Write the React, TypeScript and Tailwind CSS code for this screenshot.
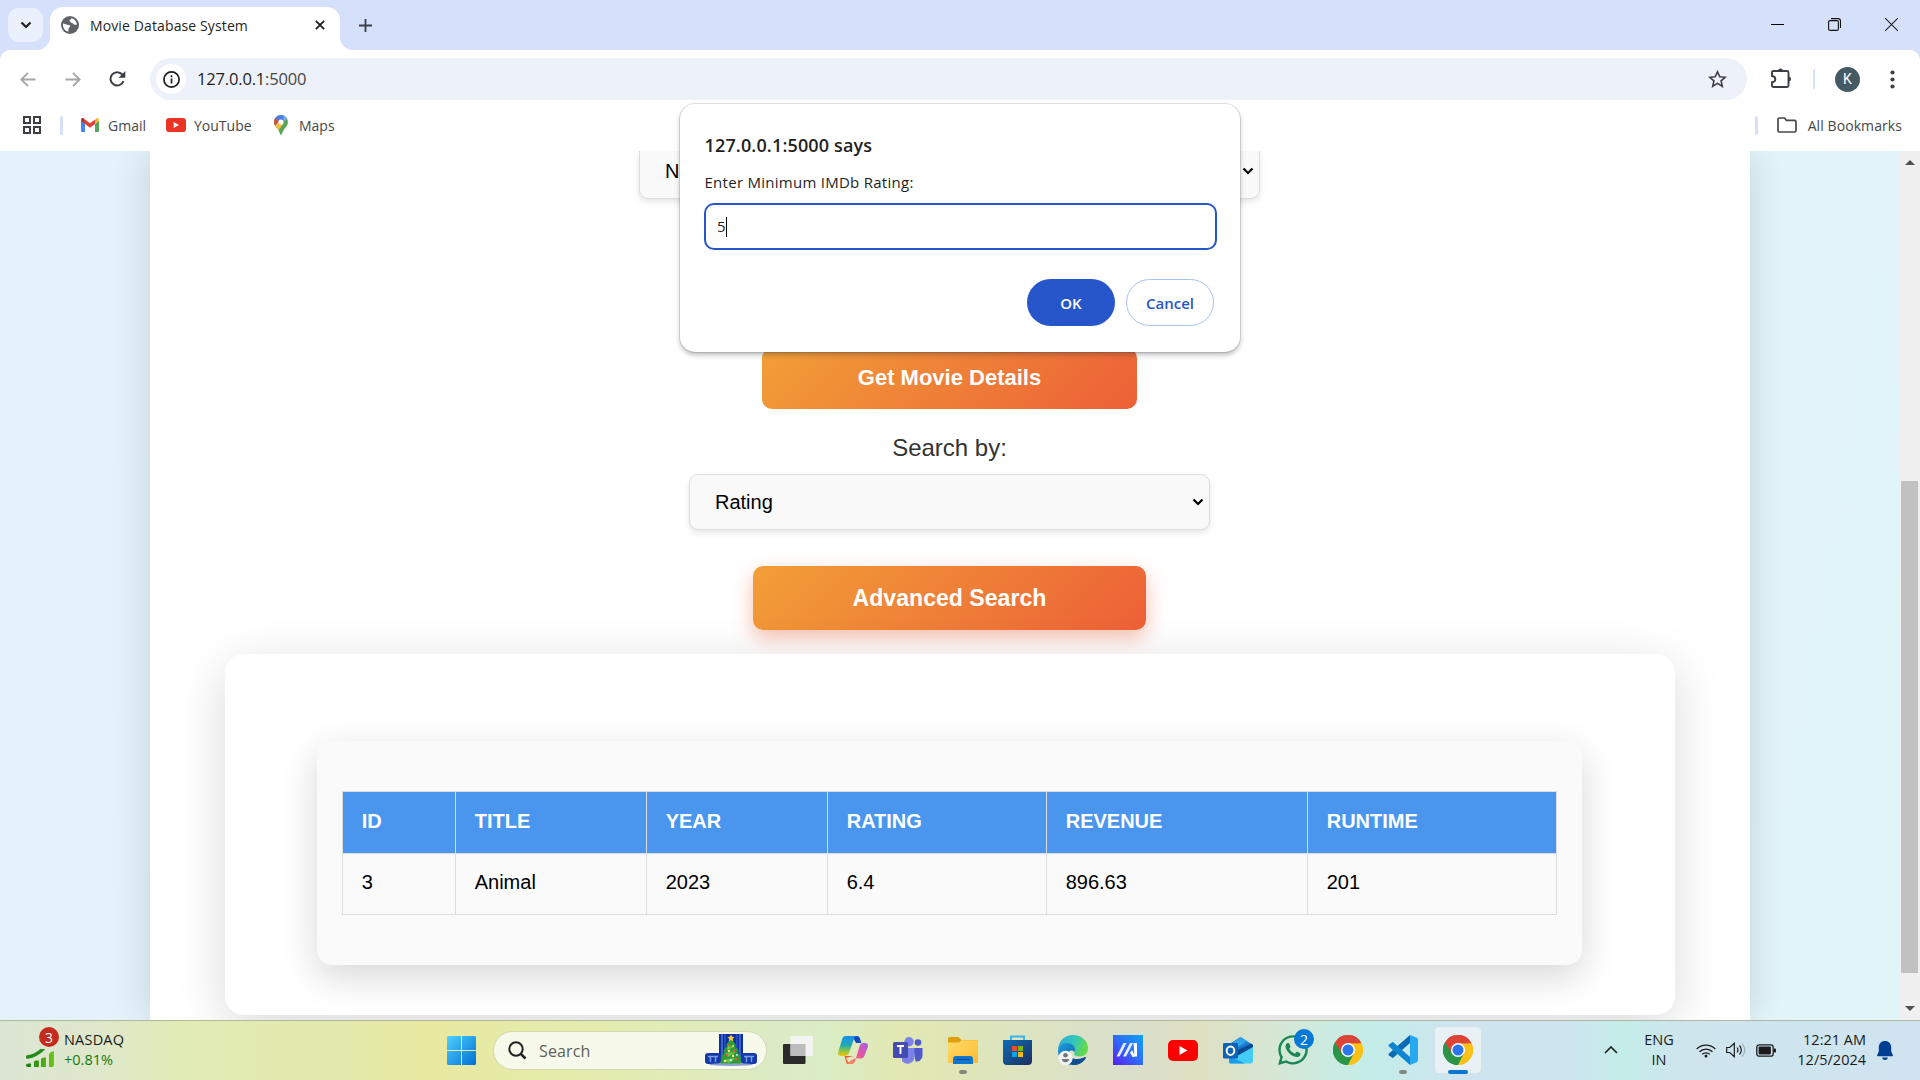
import React from "react";
import { FaWhatsapp } from "react-icons/fa";

const ui = "font-['Open_Sans','Noto_Sans',sans-serif]";

function Globe() {
  return (
    <svg width="18" height="18" viewBox="0 0 18 18">
      <circle cx="9" cy="9" r="9" fill="#5f6368" />
      <path d="M2 7.500c2 .3 3 1 4.500 1.200 2 .2 3 .6 2.600 1.800-.4 1-1.600 1-1.600 2.300v2.700C4.500 15.300 2 12.500 2 9zM10.500 2.200c-.3 1.300-1.800 1.300-2 2.400-.2 1 1.500 1 1.300 2.200 1 .2 1.700 0 2 .8.400 1 1.300 1.200 4.100 1.200-.2-3.400-2.400-6-5.400-6.600z" fill="#fff" />
    </svg>
  );
}

function Gmail() {
  return (
    <svg width="18" height="14" viewBox="0 0 18 14">
      <path d="M0 2v10.800c0 .7.500 1.200 1.200 1.200H4V6z" fill="#4285f4" />
      <path d="M14 6v8h2.800c.7 0 1.200-.5 1.200-1.200V2z" fill="#57a55a" />
      <path d="M14 1.800V6l4-3V1.800C18 .2 16.200-.5 15 .5z" fill="#f2bd42" />
      <path d="M4 6V1.500l5 3.800 5-3.800V6L9 9.800z" fill="#e34133" />
      <path d="M0 1.800V3l4 3V1.500L3 .5C1.800-.5 0 .2 0 1.800z" fill="#b8362c" />
    </svg>
  );
}

function YouTube({ w, h, fill }: { w: number; h: number; fill: string }) {
  return (
    <svg width={w} height={h} viewBox="0 0 30 21" preserveAspectRatio="none">
      <rect width="30" height="21" rx="5" fill={fill} />
      <path d="M11.500 6v9l8-4.500z" fill="#fff" />
    </svg>
  );
}

function MapsPin() {
  return (
    <svg width="14" height="20" viewBox="0 0 14 20">
      <defs>
        <clipPath id="pin">
          <path d="M7 0a7 7 0 0 0-7 7c0 3.300 2.300 5 4 7.500C5.500 16.600 6 20 7 20s1.500-3.400 3-5.500C11.700 12 14 10.300 14 7a7 7 0 0 0-7-7z" />
        </clipPath>
      </defs>
      <g clipPath="url(#pin)">
        <path d="M0 0h14v20H0z" fill="#57a55a" />
        <path d="M0 0h14L6 9 0 4z" fill="#4a80e8" />
        <path d="M0 2l5 4-5 6z" fill="#dd4b3e" />
        <path d="M0 12l5-5.500 4 3L3 17z" fill="#f2bd42" />
        <path d="M9 0l5 3-4 3z" fill="#7fa9f2" />
      </g>
      <circle cx="7" cy="7" r="2.600" fill="#fff" />
    </svg>
  );
}

function Chrome() {
  return (
    <svg width="30" height="30" viewBox="0 0 30 30">
      <path d="M15 15 2 7.500A15 15 0 0 1 28 7.500z" fill="#dd4438" />
      <path d="M15 15 28 7.500A15 15 0 0 1 15 30z" fill="#fbc116" />
      <path d="M15 15v15A15 15 0 0 1 2 7.500z" fill="#2a9447" />
      <path d="M15 8.200h13.400A15 15 0 0 1 15 30l5.900-11.600z" fill="#fbc116" />
      <path d="M9.100 18.400 2 7.500A15 15 0 0 0 15 30l5.900-11.600z" fill="#2a9447" />
      <path d="M15 8.200h13.400A15 15 0 0 0 2 7.500L9.100 18.400z" fill="#dd4438" />
      <circle cx="15" cy="15" r="7" fill="#fff" />
      <circle cx="15" cy="15" r="5.500" fill="#2b76ea" />
    </svg>
  );
}

function Copilot() {
  return (
    <svg width="30" height="28" viewBox="0 0 30 28">
      <defs>
        <linearGradient id="cpA" x1="0" y1="0" x2="0" y2="1">
          <stop offset="0" stopColor="#1a8fe8" /><stop offset=".45" stopColor="#1fa8b8" /><stop offset=".75" stopColor="#8cc63f" /><stop offset="1" stopColor="#f5c518" />
        </linearGradient>
        <linearGradient id="cpB" x1="1" y1="0" x2="0" y2="1">
          <stop offset="0" stopColor="#a45ce8" /><stop offset=".45" stopColor="#e8559f" /><stop offset="1" stopColor="#ff9a4a" />
        </linearGradient>
      </defs>
      <path d="M14 0h5c2 0 2.700 1.500 3.300 3.500L23.300 7H18z" fill="#1748c4" />
      <path d="M7.500 28h6.500c2 0 2.600-1.500 3.200-3.500l4.600-15c.5-1.700 1.700-2.600 3.400-2.600h1.800c2.400 0 3.500 1.500 2.800 4l-3.300 8.500c-.8 2-2 3-4.200 3h-6z" fill="url(#cpB)" />
      <path d="M8 22l3 6c-2 0-2.700-1.500-3.300-3.500L6.500 20h9z" fill="#f05a3c" />
      <path d="M7.500 0H19c-2 0-2.600 1.200-3.200 3.200l-4.500 13c-.6 1.700-1.800 3.800-4 3.800H2.800C.4 20-.5 18.500.3 16L4 3.500C4.700 1.300 5.500 0 7.500 0z" fill="url(#cpA)" />
    </svg>
  );
}

function Teams() {
  return (
    <svg width="30" height="27" viewBox="0 0 30 27">
      <circle cx="25" cy="5.500" r="3.300" fill="#5059c9" />
      <path d="M20 11h9.500v8a6 6 0 0 1-7 5.500z" fill="#5059c9" />
      <circle cx="16" cy="4.700" r="4.700" fill="#7b83eb" />
      <path d="M9 11h12.500v8.500a7 7 0 0 1-12.500 4.500z" fill="#7b83eb" />
      <rect y="5" width="15" height="16" rx="1.500" fill="#444bb3" />
      <path d="M4 9h7M7.500 9v8" stroke="#fff" strokeWidth="1.900" />
    </svg>
  );
}

function Folder() {
  return (
    <svg width="30" height="27" viewBox="0 0 30 27">
      <defs><linearGradient id="fo" x1="0" y1="0" x2="1" y2="1"><stop offset="0" stopColor="#ffdc6b" /><stop offset="1" stopColor="#fdbb2e" /></linearGradient></defs>
      <path d="M0 1.500C0 .6.600 0 1.500 0h8c1 0 1.500.4 2 1l2 2H28.500c1 0 1.500.6 1.500 1.500V9H0z" fill="#dea00c" />
      <path d="M0 5.500h11l2.500-2.200H28.500c1 0 1.500.6 1.500 1.500V26H0z" fill="url(#fo)" />
      <path d="M5 27v-5c0-2 1-3 3-3h14c2 0 3 1 3 3v5z" fill="#1077cf" />
      <path d="M8 22.500h13.500" stroke="#0a4f9c" strokeWidth="1.200" />
    </svg>
  );
}

function Store() {
  return (
    <svg width="29" height="30" viewBox="0 0 29 30">
      <defs><linearGradient id="st" x1="0" y1="0" x2="1" y2="1"><stop offset="0" stopColor="#0f6cb8" /><stop offset="1" stopColor="#1d2f5c" /></linearGradient></defs>
      <path d="M8 6V1.500h13V6" fill="none" stroke="#35b6ef" strokeWidth="2" />
      <path d="M0 5h29v21c0 2.500-1.500 4-4 4H4c-2.500 0-4-1.500-4-4z" fill="url(#st)" />
      <path d="M9 11h5v5H9z" fill="#f25022" /><path d="M15 11h5v5h-5z" fill="#7fba00" />
      <path d="M9 17h5v5H9z" fill="#00a4ef" /><path d="M15 17h5v5h-5z" fill="#ffb900" />
    </svg>
  );
}

function Edge() {
  return (
    <svg width="30" height="30" viewBox="0 0 30 30">
      <defs>
        <linearGradient id="edA" x1="0" y1="0" x2="1" y2=".3"><stop offset="0" stopColor="#2ba8e0" /><stop offset=".6" stopColor="#35c8b8" /><stop offset="1" stopColor="#62d94e" /></linearGradient>
        <linearGradient id="edB" x1="0" y1="0" x2="1" y2="1"><stop offset="0" stopColor="#1b9de0" /><stop offset="1" stopColor="#0c59a4" /></linearGradient>
      </defs>
      <path d="M0 14C1 5.500 7 0 15 0c8.500 0 15 6 15 13 0 5-3.500 8.500-8.500 8.500-3.500 0-5.500-1.300-5.500-2.500 0-.8 1-1.500 1-3.500C17 11 13 9 9 9c-4 0-7 2-9 5z" fill="url(#edA)" />
      <path d="M0 16c0-5 4-8 9-8 5 0 8 3 8 6.500 0 1-.3 2-.8 2.700C14.500 14 10 15.500 10 20c0 4 4 8.500 11 8.500-1.500.9-3.500 1.500-6 1.500C7 30 0 24 0 16z" fill="url(#edB)" />
      <path d="M10 18.500c.5 3 4 5.500 9 5.500 4 0 6.500-1.500 8-2 .8-.2 1.300.4.800 1.200C25 28 20 30 15.500 30c-4-1.500-6-7-5.500-11.500z" fill="#0f4f92" />
      <circle cx="7.500" cy="23" r="7.200" fill="#f4f4f4" />
      <circle cx="7.500" cy="20.300" r="2.300" fill="#70757a" />
      <path d="M3.800 24h7.400c0 2-1.500 3.200-3.700 3.200S3.800 26 3.800 24z" fill="#70757a" />
    </svg>
  );
}

function Asus() {
  return (
    <svg width="30" height="30" viewBox="0 0 30 30">
      <defs><linearGradient id="as" x1="0" y1="1" x2="1" y2="0"><stop offset="0" stopColor="#5a1ef0" /><stop offset=".5" stopColor="#2f6bfa" /><stop offset="1" stopColor="#0ea5fb" /></linearGradient></defs>
      <path d="M0 0h30v30H0z" fill="url(#as)" />
      <path d="M3.500 21.500 10.500 8h3L6.500 21.500zM10 21.500 17 8h3l-7 13.500z" fill="#e6eeff" />
      <path d="M20.500 8H24v13.500h-2.500zM17 18l2-3 2.500 5-1.500 2z" fill="#fff" />
      <circle cx="20.500" cy="20.500" r="1.500" fill="#fff" />
    </svg>
  );
}

function Outlook() {
  return (
    <svg width="30" height="27" viewBox="0 0 30 27">
      <path d="M5 8 16.500.5c.6-.4 1.400-.4 2 0L30 8v9H5z" fill="#1a7fd0" />
      <path d="M10 5l7-4.500L24 4 12 12z" fill="#2fa3e6" />
      <path d="M8 10h19v9H8z" fill="#1573c4" />
      <path d="M11 15 28 6.500 30 8v4L17 19z" fill="#0b4a92" />
      <path d="M14 19 30 10v14c0 1.500-1 2.500-2.500 2.500H8C7 26.500 6 26 6 25z" fill="#43cdf5" />
      <path d="M6 19l16 7.500H8c-1.500 0-2-1-2-2z" fill="#1b9be8" />
      <rect y="6" width="15" height="15.500" rx="1.200" fill="#0f62b5" />
      <ellipse cx="7.500" cy="13.700" rx="3.800" ry="4.200" fill="none" stroke="#fff" strokeWidth="2" />
    </svg>
  );
}

function VSCode() {
  return (
    <svg width="30" height="30" viewBox="0 0 30 30">
      <path d="M22 0v8L5.500 22.500c-.5.500-1 .5-1.600.1L1 20.500c-.7-.6-.7-1.500 0-2.100z" fill="#0a6ab4" />
      <path d="M22 30v-8L5.500 7.500c-.5-.5-1-.5-1.600-.1L1 9.500c-.7.6-.7 1.500 0 2.100z" fill="#0f86cf" />
      <path d="M22 0l6.700 2.800c.8.300 1.300 1 1.300 1.800v20.800c0 .8-.5 1.500-1.300 1.800L22 30z" fill="#27a8f0" />
    </svg>
  );
}

function TreeArt() {
  return (
    <svg width="52" height="32" viewBox="0 0 52 32">
      <path d="M14 0h24v28H14z" fill="#0b2fa0" />
      <path d="M17 0v26M35 0v26" stroke="#5f86dd" strokeWidth="1.200" />
      <path d="M20 0v26M32 0v26" stroke="#2a55c4" strokeWidth="1.500" />
      <rect y="19" width="16" height="11" rx="3" fill="#1539aa" />
      <rect x="36" y="19" width="16" height="11" rx="3" fill="#1539aa" />
      <path d="M3 22.500h10M5.500 22v6M10.500 22v6M39 22.500h10M41.500 22v6M46.500 22v6" stroke="#7aa0ea" strokeWidth="1.400" />
      <ellipse cx="26" cy="30.500" rx="22" ry="1.500" fill="#8a9fd0" />
      <path d="M26 4l5 7-1 1 4 5-1.500 1 4 6-1 1 1.500 4.500H15l1.500-4.500-1-1 4-6-1.500-1 4-5-1-1z" fill="#2f9a36" />
      <path d="M23 12l6 1-7 3zM20 19l11-1-8 5zM18 26l13-2-7 5z" fill="#6cc644" />
      <path d="M26 .5l1.200 2.300 2.400.3-1.800 1.700.5 2.500L26 6l-2.300 1.300.5-2.500-1.800-1.700 2.400-.3z" fill="#ffc83d" />
      <g fill="#f4504a"><circle cx="24" cy="11" r="1" /><circle cx="29" cy="17" r="1.200" /><circle cx="22" cy="21" r="1.200" /><circle cx="31" cy="25" r="1.200" /></g>
      <g fill="#ffe08a"><circle cx="28" cy="12" r="1" /><circle cx="24" cy="17" r="1.200" /><circle cx="28" cy="22" r="1.200" /><circle cx="20" cy="27" r="1.200" /></g>
      <g fill="#bfe8ff"><circle cx="26" cy="26" r="1.200" /><circle cx="32" cy="21" r="1" /></g>
    </svg>
  );
}

function TabStrip() {
  return (
    <div className="flex h-[50px] shrink-0 bg-[#d5e0fb]">
      <div className="ml-2 mt-2 flex h-[34px] w-[35px] items-center justify-center rounded-[11px] bg-[#ebf1fc]">
        <svg width="12" height="8" viewBox="0 0 12 8"><path d="M1.500 1.500 6 6l4.500-4.500" fill="none" stroke="#1f1f1f" strokeWidth="2.200" /></svg>
      </div>
      <div className="ml-[-6px] h-[13px] w-[13px] self-end bg-[radial-gradient(circle_at_0_0,transparent_12.500px,#ffffff_13.500px)]" />
      <div className="mt-[7px] flex h-[43px] w-[290px] items-center rounded-t-[13px] bg-white pb-[7px] pl-[11px]">
        <Globe />
        <span className="ml-[11px] whitespace-nowrap text-[14px] tracking-[0.120px] text-[#1f1f1f]">Movie Database System</span>
        <svg className="ml-auto mr-[15px]" width="10" height="10" viewBox="0 0 10 10"><path d="M.8.8l8.400 8.400M9.200.8.800 9.200" stroke="#1f1f1f" strokeWidth="1.800" /></svg>
      </div>
      <div className="h-[13px] w-[13px] self-end bg-[radial-gradient(circle_at_100%_0,transparent_12.500px,#ffffff_13.500px)]" />
      <svg className="ml-[6px] mt-[19px]" width="13" height="13" viewBox="0 0 13 13"><path d="M6.500 0v13M0 6.500h13" stroke="#3c3f43" strokeWidth="1.800" /></svg>
      <div className="ml-auto mr-[22px] mt-[18px] flex h-[13px] gap-[44px]">
        <svg width="13" height="13" viewBox="0 0 13 13" shapeRendering="crispEdges"><path d="M0 6.500h13" stroke="#000" /></svg>
        <svg width="13" height="13" viewBox="0 0 13 13"><rect x=".6" y="2.600" width="9.800" height="9.800" rx="1.500" fill="none" stroke="#111" strokeWidth="1.100" /><path d="M3 .6h7c1.500 0 2.500 1 2.500 2.500v7" fill="none" stroke="#111" strokeWidth="1.100" /></svg>
        <svg width="13" height="13" viewBox="0 0 13 13"><path d="M0 0l13 13M13 0 0 13" stroke="#222" strokeWidth="1.100" /></svg>
      </div>
    </div>
  );
}

function Toolbar() {
  return (
    <div className="shrink-0 bg-[#d5e0fb]">
      <div className="flex h-[58px] items-start rounded-t-[10px] bg-white pt-2">
        <div className="flex h-[42px] w-[150px] items-center pl-5">
          <svg width="16" height="15" viewBox="0 0 16 15"><path d="M15.500 7.500H1.500M8 .8 1.300 7.500 8 14.200" fill="none" stroke="#a5a7aa" strokeWidth="1.900" /></svg>
          <svg className="ml-[29px]" width="16" height="15" viewBox="0 0 16 15"><path d="M.5 7.500h14M8 .8l6.700 6.700L8 14.200" fill="none" stroke="#a5a7aa" strokeWidth="1.900" /></svg>
          <svg className="ml-[28px]" width="17" height="16" viewBox="0 0 17 16"><path d="M14.500 10.200A6.700 6.700 0 1 1 13.300 3.500L15 5.300" fill="none" stroke="#3c3f43" strokeWidth="2" /><path d="M16.300 0v6.700H9.600z" fill="#3c3f43" /></svg>
        </div>
        <div className="flex h-[42px] w-[1597px] items-center rounded-full bg-[#edf1f9] pl-[6px] pr-5">
          <div className="flex h-[30px] w-[30px] items-center justify-center rounded-full bg-white">
            <svg width="17" height="17" viewBox="0 0 17 17"><circle cx="8.500" cy="8.500" r="7.600" fill="none" stroke="#1f1f1f" strokeWidth="1.700" /><path d="M8.500 7.500V12.500M8.500 4.300v1.900" stroke="#1f1f1f" strokeWidth="1.700" /></svg>
          </div>
          <span className="ml-[11px] text-[16.500px] tracking-[-0.170px] text-[#1f1f1f]">127.0.0.1<span className="text-[#474747]">:5000</span></span>
          <svg className="ml-auto" width="19" height="18" viewBox="0 0 19 18"><path d="M9.500 1.800l2.300 5 5.400.5-4.100 3.600 1.200 5.400-4.800-2.900-4.800 2.900 1.200-5.400L1.800 7.300l5.400-.5z" fill="none" stroke="#3c3f43" strokeWidth="1.600" /></svg>
        </div>
        <div className="flex h-[42px] items-center pl-6">
          <svg className="mb-[2px]" width="21" height="21" viewBox="0 0 21 21"><path d="M1 4.500c0-.8.500-1.500 1.300-1.500H16c.8 0 1.500.6 1.500 1.500V17.500c0 .8-.6 1.500-1.500 1.500H2.500C1.600 19 1 18.300 1 17.500v-3.300c2.200-.2 3.300-1.300 3.300-3S3.200 8.300 1 8z" fill="none" stroke="#3c3f43" strokeWidth="1.900" /><path d="M7 3a2.500 2.500 0 0 1 5 0zM17.500 8.500a2.500 2.500 0 0 1 0 5z" fill="#3c3f43" /></svg>
          <div className="ml-[21px] h-5 w-[2px] rounded bg-[#d5e0fb]" />
          <div className="ml-5 flex h-[25px] w-[25px] items-center justify-center rounded-full bg-[#455a64] font-[Roboto,sans-serif] text-[14px] text-white">K</div>
          <svg className="ml-[30px]" width="5" height="19" viewBox="0 0 5 19" fill="#3c3f43"><circle cx="2.500" cy="2.500" r="2.100" /><circle cx="2.500" cy="9.500" r="2.100" /><circle cx="2.500" cy="16.500" r="2.100" /></svg>
        </div>
      </div>
    </div>
  );
}

function Bookmarks() {
  return (
    <div className="flex h-[43px] shrink-0 items-center bg-white pb-[9px] pl-[23px] text-[14px] text-[#474747] [&>*]:shrink-0">
      <svg width="18" height="18" viewBox="0 0 18 18" fill="none" stroke="#3c3f43" strokeWidth="2"><path d="M1 1h6v6H1zM11 1h6v6h-6zM1 11h6v6H1zM11 11h6v6h-6z" /></svg>
      <div className="ml-[19px] h-[19px] w-[3px] rounded bg-[#d5e0fb]" />
      <div className="ml-[18px]"><Gmail /></div>
      <span className="ml-[9px] w-[58px]">Gmail</span>
      <YouTube w={20} h={14} fill="#e93423" />
      <span className="ml-2 w-[80px]">YouTube</span>
      <MapsPin />
      <span className="ml-[11px]">Maps</span>
      <div className="ml-auto h-[19px] w-[3px] rounded bg-[#d5e0fb]" />
      <svg className="ml-[19px]" width="20" height="16" viewBox="0 0 20 16"><path d="M1 2.500C1 1.600 1.600 1 2.500 1h5l2 2.300h8c.9 0 1.500.6 1.500 1.500v8.700c0 .9-.6 1.500-1.500 1.500h-15C1.600 15 1 14.400 1 13.500z" fill="none" stroke="#474747" strokeWidth="1.700" /></svg>
      <span className="ml-[11px] mr-[18px] tracking-[0.080px]">All Bookmarks</span>
    </div>
  );
}

function Caret() {
  return <svg width="12" height="8" viewBox="0 0 12 8"><path d="M1.500 1.500 6 6l4.500-4.500" fill="none" stroke="#000" strokeWidth="2.200" /></svg>;
}

const columns: { name: string; value: string; width: string }[] = [
  { name: "ID", value: "3", width: "w-[113px]" },
  { name: "TITLE", value: "Animal", width: "w-[191px]" },
  { name: "YEAR", value: "2023", width: "w-[181px]" },
  { name: "RATING", value: "6.4", width: "w-[219px]" },
  { name: "REVENUE", value: "896.63", width: "w-[261px]" },
  { name: "RUNTIME", value: "201", width: "w-[249px]" },
];

function PageBody() {
  return (
    <div className="flex h-[869px] w-[1899px] justify-center overflow-hidden bg-[linear-gradient(100deg,#e4f2fb,#e2f5f9)] font-['Liberation_Sans',Arial,sans-serif]">
      <div className="flex h-[869px] w-[1600px] shrink-0 flex-col items-center bg-white shadow-[0_0_36px_rgba(0,0,0,0.14)]">
        <div className="flex h-[48px] w-[621px] shrink-0 items-center rounded-b-[9px] border border-t-0 border-[#ddd] bg-[#f9f9f9] pb-[7px] pl-[25px] pr-[5px] shadow-[0_3px_6px_rgba(0,0,0,0.1)]">
          <span className="grow text-[20px] text-black">None</span>
          <Caret />
        </div>
        <div className="mt-[149px] flex h-[61px] w-[375px] shrink-0 items-center justify-center rounded-[10px] bg-[linear-gradient(135deg,#f29f37,#ec6037)] pb-[2px] text-[22px] font-bold text-white">Get Movie Details</div>
        <div className="mt-[25px] h-[27px] shrink-0 text-[24px] leading-[27px] text-[#333]">Search by:</div>
        <div className="mt-[13px] flex h-[56px] w-[521px] shrink-0 items-center rounded-[9px] border border-[#ddd] bg-[#f9f9f9] pl-[25px] pr-[5px] shadow-[0_3px_6px_rgba(0,0,0,0.1)]">
          <span className="grow text-[20px] text-black">Rating</span>
          <Caret />
        </div>
        <div className="mt-[36.400px] flex h-[64px] w-[393.500px] shrink-0 items-center justify-center rounded-[10px] bg-[linear-gradient(135deg,#f29f37,#ec6037)] text-[23.100px] font-bold text-white shadow-[0_8px_20px_rgba(236,96,55,0.4)]">Advanced Search</div>
        <div className="mt-[23.600px] flex h-[361px] w-[1450px] shrink-0 flex-col items-center rounded-[19px] bg-white pt-[87px] shadow-[0_12px_50px_rgba(0,0,0,0.15)]">
          <div className="flex h-[224px] w-[1265px] flex-col items-center rounded-[15px] bg-[#fafafa] pt-[50px] shadow-[0_12px_37px_rgba(0,0,0,0.16)]">
            <table className="w-[1215px] table-fixed border-collapse text-left text-[20px] text-black">
              <thead>
                <tr className="h-[62px] bg-[#4a95ed] text-white">
                  {columns.map((c) => <th key={c.name} className={`${c.width} border border-[#ddd] pb-[2px] pl-[18.700px] font-bold`}>{c.name}</th>)}
                </tr>
              </thead>
              <tbody>
                <tr className="h-[61px]">
                  {columns.map((c) => <td key={c.name} className="border border-[#ddd] pb-[3px] pl-[18.700px]">{c.value}</td>)}
                </tr>
              </tbody>
            </table>
          </div>
        </div>
      </div>
    </div>
  );
}

function Scrollbar() {
  return (
    <div className="flex h-[869px] w-[21px] flex-col items-center bg-[#f0f0f0]">
      <svg className="mt-[9px] shrink-0" width="10" height="5" viewBox="0 0 10 5"><path d="M5 0l5 5H0z" fill="#505050" /></svg>
      <div className="mt-[316px] h-[492px] w-[17px] shrink-0 bg-[#c1c1c1]" />
      <svg className="mt-[33px] shrink-0" width="10" height="5" viewBox="0 0 10 5"><path d="M5 5 0 0h10z" fill="#505050" /></svg>
    </div>
  );
}

function Prompt() {
  return (
    <div className="absolute left-[680px] top-[104px] flex h-[248px] w-[560px] flex-col rounded-[15px] bg-white px-6 pt-[28px] shadow-[0_0_0_1px_rgba(0,0,0,0.1),0_3px_5px_rgba(60,64,67,0.35)]">
      <div className="ml-[0.500px] h-[26px] text-[18px] font-semibold leading-[26px] tracking-[0.150px] text-[#1f1f1f]">127.0.0.1:5000 says</div>
      <div className="ml-[0.500px] mt-[13px] h-[22px] text-[15px] leading-[22px] tracking-[0.270px] text-[#1f1f1f]">Enter Minimum IMDb Rating:</div>
      <div className="mt-[10px] flex h-[47px] w-[512.500px] items-center rounded-[10px] border-[2.500px] border-[#2656c9] pl-[11px] text-[15px] text-[#1f1f1f]">
        5<div className="h-5 w-px bg-black" />
      </div>
      <div className="mr-[2px] mt-[29px] flex justify-end gap-[11px] text-[15px] font-semibold">
        <div className="flex h-[47px] w-[88px] items-center justify-center rounded-full bg-[#2656c9] pt-px text-white">OK</div>
        <div className="flex h-[47px] w-[88px] items-center justify-center rounded-full border border-[#a8c2f5] pt-px text-[#2656c9]">Cancel</div>
      </div>
    </div>
  );
}

function Slot({ children, dot }: { children: React.ReactNode; dot?: boolean }) {
  return (
    <div className="relative flex h-[58px] w-[55px] shrink-0 items-center justify-center">
      {children}
      {dot && <div className="absolute bottom-[5px] h-[4px] w-[8px] rounded-full bg-[#838781]" />}
    </div>
  );
}

function Taskbar() {
  return (
    <div className="flex h-[60px] shrink-0 items-center border-t border-[#b0b8a0] bg-[linear-gradient(to_right,#dce6d4_0px,#dfe8ca_100px,#e1ebb4_180px,#e3eaae_330px,#e9e9a0_430px,#e3ecae_600px,#dcebc6_780px,#dbedc4_830px,#e2e8b2_900px,#dde4be_1010px,#dadfcc_1130px,#dfe0c2_1200px,#d3e8d8_1290px,#c3ede8_1370px,#cee5f0_1460px,#cee5ef_1570px,#c3ede8_1620px,#cee5ee_1680px,#cfe4f0_1920px)] pb-px text-[#1b1b1b] [&>*]:shrink-0">
      <div className="relative ml-[26px] h-[38px] w-[34px]">
        <svg className="mt-[18px]" width="28" height="18" viewBox="0 0 28 18">
          <defs><linearGradient id="nq"><stop offset="0" stopColor="#147a12" /><stop offset="1" stopColor="#70c814" /></linearGradient></defs>
          <path d="M1.500 8C8 7 14 3 17 0" fill="none" stroke="#238c1a" strokeWidth="3.500" strokeLinecap="round" />
          <path d="M0 16q0-1.500 2.500-1.500H5V18H2q-2 0-2-2zM8 13q0-1.500 2-1.500h3V18H8zM15 11q0-2.500 3-2.500h2V18h-5zM23 6q0-3 5-4v14q0 2-2 2h-3z" fill="url(#nq)" />
        </svg>
        <div className="absolute left-[13px] top-[-4px] flex h-5 w-5 items-center justify-center rounded-full bg-[#c42b1c] text-[14px] text-white">3</div>
      </div>
      <div className="ml-1 w-[383px] text-[14.500px] leading-[20px]">
        <div className="tracking-[0.2px]">NASDAQ</div>
        <div className="text-[#107c10]">+0.81%</div>
      </div>
      <svg width="29" height="29" viewBox="0 0 29 29">
        <defs><linearGradient id="win" x1="0" y1="0" x2="1" y2="1"><stop offset="0" stopColor="#4fd0ff" /><stop offset="1" stopColor="#0070d4" /></linearGradient></defs>
        <path d="M1 0h13v14H0V1zM15 0h13l1 1v13H15zM0 15h14v14H1l-1-1zM15 15h14v13l-1 1H15z" fill="url(#win)" />
      </svg>
      <div className="ml-[17px] flex h-[39px] w-[274px] items-center rounded-full border border-[#d2d8b4] bg-[#f7f9ea] pl-[14px] pr-[9px] text-[16px] text-[#5f615a]">
        <svg width="19" height="19" viewBox="0 0 19 19" fill="none" stroke="#222"><circle cx="8" cy="8" r="6.700" strokeWidth="2" /><path d="M12.800 12.800 17.500 17.500" strokeWidth="2.600" /></svg>
        <span className="ml-[12px] grow pt-px tracking-[0.150px]">Search</span>
        <TreeArt />
      </div>
      <div className="ml-[3px] flex">
        <Slot>
          <svg width="30" height="28" viewBox="0 0 30 28">
            <rect y="8" width="22.500" height="20" rx="1" fill="#2b2b2b" />
            <rect x="7.500" width="22.500" height="20" rx="1" fill="#f4f4f4" opacity=".95" />
            <path d="M7.500 8h15v12h-15z" fill="#bcbcbc" />
          </svg>
        </Slot>
        <Slot><Copilot /></Slot>
        <Slot><Teams /></Slot>
        <Slot dot><Folder /></Slot>
        <Slot><Store /></Slot>
        <Slot><Edge /></Slot>
        <Slot><Asus /></Slot>
        <Slot><YouTube w={30} h={21} fill="#ff0000" /></Slot>
        <Slot><Outlook /></Slot>
        <Slot>
          <FaWhatsapp size={34} color="#1b8755" />
          <div className="absolute left-[29px] top-[8px] flex h-5 w-5 items-center justify-center rounded-full bg-[#0078d4] text-[14px] text-white">2</div>
        </Slot>
        <Slot><Chrome /></Slot>
        <Slot dot><VSCode /></Slot>
        <Slot>
          <div className="absolute h-[48px] w-[48px] rounded-[5px] border border-[#d5e3e8] bg-[#e8f2f6]" />
          <div className="relative"><Chrome /></div>
          <div className="absolute bottom-[5px] h-[4px] w-5 rounded-full bg-[#0b75d1]" />
        </Slot>
      </div>
      <svg className="ml-[119px]" width="14" height="8" viewBox="0 0 14 8"><path d="M1 7l6-6 6 6" fill="none" stroke="#1b1b1b" strokeWidth="1.600" /></svg>
      <div className="ml-[21px] w-[40px] text-center text-[14.500px] leading-[20px]"><div>ENG</div><div>IN</div></div>
      <svg className="ml-[17px]" width="20" height="15" viewBox="0 0 20 15" fill="none" stroke="#1b1b1b" strokeWidth="1.300">
        <path d="M.7 6a13 13 0 0 1 18.600 0M3.500 8.800a9.200 9.200 0 0 1 13 0M6.200 11.300a5.500 5.500 0 0 1 7.600 0" /><circle cx="10" cy="13" r="1.500" fill="#1b1b1b" stroke="none" />
      </svg>
      <svg className="ml-[10px]" width="20" height="16" viewBox="0 0 20 16" fill="none" stroke="#1b1b1b" strokeWidth="1.200">
        <path d="M.7 5.500h3L8.300 1.300v13.400L3.700 10.500h-3zM11 5.500c1.200 1.500 1.200 3.500 0 5M13.500 3.500c2.200 2.700 2.200 6.300 0 9" /><path d="M16 1.500c3.500 4 3.500 9 0 13" stroke="#9fb0b8" />
      </svg>
      <svg className="ml-[10px]" width="20" height="13" viewBox="0 0 20 13"><rect x=".8" y=".8" width="16.400" height="11.400" rx="2.500" fill="none" stroke="#1b1b1b" strokeWidth="1.300" /><rect x="2.600" y="2.600" width="12.300" height="7.800" rx="1" fill="#1b1b1b" /><path d="M18 4.500h1q1 0 1 1v2q0 1-1 1h-1z" fill="#1b1b1b" /></svg>
      <div className="ml-[10px] w-[80px] text-right text-[14.500px] leading-[20px]"><div>12:21 AM</div><div>12/5/2024</div></div>
      <svg className="ml-[11px]" width="16" height="19" viewBox="0 0 16 19" fill="#003e92"><path d="M8 0c3.700 0 6.200 2.700 6.200 6.300v4.200L16 14.500q0 .8-.8.800H.8q-.8 0-.8-.8l1.800-4V6.300C1.800 2.700 4.300 0 8 0zM5 16.500h6q-.6 2.500-3 2.500t-3-2.500z" /></svg>
    </div>
  );
}

export default function App() {
  return (
    <div className={`relative flex h-[1080px] w-[1920px] flex-col overflow-hidden bg-white ${ui}`}>
      <TabStrip />
      <Toolbar />
      <Bookmarks />
      <div className="flex h-[869px] shrink-0">
        <PageBody />
        <Scrollbar />
      </div>
      <Prompt />
      <Taskbar />
    </div>
  );
}
